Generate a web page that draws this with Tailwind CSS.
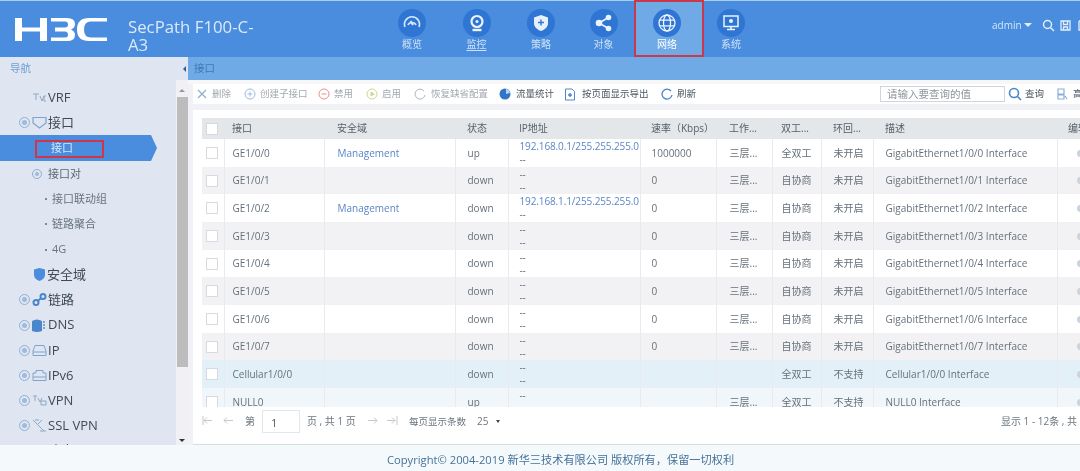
<!DOCTYPE html>
<html lang="zh">
<head>
<meta charset="utf-8">
<script src="https://cdn.jsdelivr.net/npm/@tailwindcss/browser@4"></script>
<title>H3C</title>
</head>
<body class="m-0 overflow-hidden bg-white">
<div class="w-[1080px] h-[471px] overflow-hidden flex flex-col blur-[0.45px] font-['Open_Sans','Noto_Sans_CJK_SC',sans-serif]">

  <!-- Top bar -->
  <header class="h-[57px] shrink-0 flex bg-[#4a8cdd] border-t border-[#a8d0ee] text-[#cfe2f6]">
    <div class="w-[128px] shrink-0 pl-[15px] pt-[17px]">
      <svg width="93" height="24" viewBox="0 0 93 24" fill="#fff">
        <path d="M0 0H7V9.500H25V0H32V23H25V13.500H7V23H0Z"/>
        <path d="M36 0H52Q60 0 60 6Q60 10 56 11.500Q60 13 60 17Q60 23 52 23H36V19.500H50Q53 19.500 53 17Q53 13.500 50 13.500H40V9.500H50Q53 9.500 53 6.500Q53 3.500 50 3.500H36Z"/>
        <path d="M92 0V3.500H76Q69 3.500 69 11.500Q69 19.500 76 19.500H92V23H74Q62 23 62 11.500Q62 0 74 0Z"/>
      </svg>
    </div>
    <div class="w-[130px] shrink-0 pt-[17px] text-[16.800px] leading-[18px] text-[#dbe9f8]">SecPath F100-C-<br>A3</div>
    <div class="flex ml-[122px] text-[10px] leading-[12px] text-center">
      <div class="w-[64px] pt-[8px] flex flex-col items-center gap-[1px]">
        <div class="w-[28px] h-[28px] rounded-full bg-[#2f75d3] flex items-center justify-center">
          <svg width="18" height="18" viewBox="0 0 18 18" fill="none" stroke="#d7e8fa" stroke-width="1.600"><path d="M2 13A7.500 7.500 0 1 1 16 13"/><path d="M5 11A4.500 4.500 0 0 1 13 11"/><path d="M7.500 7L10 11" stroke-width="2"/></svg>
        </div>
        <span>概览</span>
      </div>
      <div class="w-[65px] pt-[8px] flex flex-col items-center gap-[1px]">
        <div class="w-[28px] h-[28px] rounded-full bg-[#2f75d3] flex items-center justify-center">
          <svg width="18" height="18" viewBox="0 0 18 18" fill="none" stroke="#eaf3fc" stroke-width="2.200"><circle cx="9" cy="7.500" r="5.500"/><circle cx="9" cy="7.500" r="1.500" fill="#eaf3fc" stroke="none"/><path d="M4.500 16H13.500" stroke-width="2.400"/></svg>
        </div>
        <span class="underline underline-offset-2">监控</span>
      </div>
      <div class="w-[64px] pt-[8px] flex flex-col items-center gap-[1px]">
        <div class="w-[28px] h-[28px] rounded-full bg-[#2f75d3] flex items-center justify-center">
          <svg width="18" height="18" viewBox="0 0 18 18"><path d="M9 1L16 3.500V9C16 13 13 15.500 9 17C5 15.500 2 13 2 9V3.500Z" fill="#e6f0fb"/><path d="M9 5.500V11.500M6 8.500H12" stroke="#2f75d3" stroke-width="1.400"/></svg>
        </div>
        <span>策略</span>
      </div>
      <div class="w-[61px] pt-[8px] flex flex-col items-center gap-[1px]">
        <div class="w-[28px] h-[28px] rounded-full bg-[#2f75d3] flex items-center justify-center">
          <svg width="18" height="18" viewBox="0 0 18 18" fill="#eaf3fc"><circle cx="13.500" cy="3.500" r="2.800"/><circle cx="13.500" cy="14.500" r="2.800"/><circle cx="4" cy="9" r="3.300"/><path d="M4 9L13.500 3.500M4 9L13.500 14.500" stroke="#eaf3fc" stroke-width="1.600"/></svg>
        </div>
        <span>对象</span>
      </div>
      <div class="w-[70px] h-[57px] -mt-px pt-[7px] pr-[4px] flex flex-col items-center gap-[1px] bg-[#6fa9e6] border-2 border-[#c9394b] text-white">
        <div class="w-[28px] h-[28px] rounded-full bg-[#2f75d3] flex items-center justify-center">
          <svg width="20" height="20" viewBox="0 0 20 20" fill="none" stroke="#eef5fd" stroke-width="1.300"><circle cx="10" cy="10" r="8"/><ellipse cx="10" cy="10" rx="3.500" ry="8"/><path d="M2.500 7.200H17.500M2.500 12.800H17.500"/></svg>
        </div>
        <span>网络</span>
      </div>
      <div class="w-[54px] pt-[8px] flex flex-col items-center gap-[1px]">
        <div class="w-[28px] h-[28px] rounded-full bg-[#2f75d3] flex items-center justify-center">
          <svg width="18" height="18" viewBox="0 0 18 18" fill="none" stroke="#eaf3fc" stroke-width="1.500"><rect x="2" y="2" width="14" height="10.500"/><circle cx="9" cy="7" r="2" fill="#eaf3fc" stroke="none"/><path d="M5 15.500H13M9 12.500V15.500"/></svg>
        </div>
        <span>系统</span>
      </div>
    </div>
    <div class="ml-[234px] pt-[17px] flex items-center h-[14px] box-content text-[10px] leading-[14px] text-[#d5e6f8]">
      <span class="w-[28px] shrink-0">admin</span>
      <span class="ml-[4px] w-0 h-0 border-x-[4px] border-x-transparent border-t-[4px] border-t-[#e2eefa]"></span>
      <svg class="ml-[10px] shrink-0" width="13" height="13" viewBox="0 0 13 13" fill="none" stroke="#e2eefa" stroke-width="1.500"><circle cx="5.500" cy="5.500" r="4"/><path d="M8.500 8.500L12 12"/></svg>
      <svg class="ml-[5px] shrink-0" width="11" height="11" viewBox="0 0 11 11" fill="none" stroke="#e2eefa" stroke-width="1.300"><path d="M1 1H10V10H1ZM3.500 1V4.500H7.500V1M3.500 10V7H7.500V10"/></svg>
      <svg class="ml-[7px] shrink-0" width="8" height="11" viewBox="0 0 8 11" fill="none" stroke="#e2eefa" stroke-width="1.300"><path d="M1 1H8M1 1V10H8"/></svg>
    </div>
  </header>

  <!-- Middle -->
  <div class="h-[388px] shrink-0 flex">
    <!-- Sidebar -->
    <aside class="w-[176px] shrink-0 bg-[#dfe6f2] overflow-hidden text-[13px] text-[#3e4a56]">
      <div class="h-[28px] pl-[10px] pt-[3px] text-[10.500px] leading-[16px] text-[#6f9fd6]">导航</div>
      <div class="h-[25.200px] flex items-center pl-[33px]">
        <svg width="14" height="10" viewBox="0 0 14 10" fill="none" stroke="#8fa9c4" stroke-width="1"><path d="M0 1H6M3 1V7M7 3L9 8L11 3M13 3H11V8H13"/></svg>
        <span class="ml-[1px]">VRF</span>
      </div>
      <div class="h-[25.200px] flex items-center pl-[19px]">
        <span class="w-[11px] h-[11px] rounded-full border border-[#8fb0d4] flex items-center justify-center"><span class="w-[5px] h-[5px] rounded-full bg-[#9dbbdc]"></span></span>
        <svg class="ml-[2px]" width="15" height="13" viewBox="0 0 15 13" fill="none" stroke="#7ea4cf" stroke-width="1.200"><path d="M1 1.500H14V7L7.500 12L1 7Z"/></svg>
        <span class="ml-[1px]">接口</span>
      </div>
      <div class="relative h-[26px] w-[151px] bg-[#4a8cdd] pl-[51px] text-[11px] leading-[26px] text-[#d8e8f8]">接口
        <span class="absolute left-[151px] top-0 w-0 h-0 border-y-[13px] border-y-transparent border-l-[6px] border-l-[#4a8cdd]"></span>
        <span class="absolute left-[35px] top-[5px] w-[69px] h-[18px] border-2 border-[#d03646]"></span>
      </div>
      <div class="h-[25.200px] flex items-center pl-[32px] text-[11px] text-[#5a6773]">
        <span class="w-[10px] h-[10px] rounded-full border border-[#8fb0d4] flex items-center justify-center"><span class="w-[4px] h-[4px] rounded-full bg-[#9dbbdc]"></span></span>
        <span class="ml-[6px]">接口对</span>
      </div>
      <div class="h-[25.200px] flex items-center pl-[45px] text-[11px] text-[#68747f]"><span class="w-[2px] h-[2px] bg-[#7d8a96] mr-[5px]"></span>接口联动组</div>
      <div class="h-[25.200px] flex items-center pl-[45px] text-[11px] text-[#68747f]"><span class="w-[2px] h-[2px] bg-[#7d8a96] mr-[5px]"></span>链路聚合</div>
      <div class="h-[25.200px] flex items-center pl-[45px] text-[11px] text-[#68747f]"><span class="w-[2px] h-[2px] bg-[#7d8a96] mr-[5px]"></span>4G</div>
      <div class="h-[25.200px] flex items-center pl-[34px]">
        <svg width="11" height="13" viewBox="0 0 11 13"><path d="M5.500 0L11 1.500V7C11 10 8.500 12 5.500 13C2.500 12 0 10 0 7V1.500Z" fill="#4a8cdd"/></svg>
        <span class="ml-[2px]">安全域</span>
      </div>
      <div class="h-[25.200px] flex items-center pl-[19px]">
        <span class="w-[11px] h-[11px] rounded-full border border-[#8fb0d4] flex items-center justify-center"><span class="w-[5px] h-[5px] rounded-full bg-[#9dbbdc]"></span></span>
        <svg class="ml-[2px]" width="15" height="13" viewBox="0 0 15 13" fill="none" stroke="#4a86cc" stroke-width="2"><circle cx="4" cy="9.500" r="2.500"/><circle cx="11" cy="3.500" r="2.500"/><path d="M5.500 8L9.500 5"/></svg>
        <span class="ml-[1px]">链路</span>
      </div>
      <div class="h-[25.200px] flex items-center pl-[19px]">
        <span class="w-[11px] h-[11px] rounded-full border border-[#8fb0d4] flex items-center justify-center"><span class="w-[5px] h-[5px] rounded-full bg-[#9dbbdc]"></span></span>
        <svg class="ml-[2px]" width="15" height="13" viewBox="0 0 15 13"><path d="M0 2Q5 -1 10 2V12Q5 14 0 12Z" fill="#4a86cc"/><path d="M12 2V11" stroke="#7ea4cf" stroke-width="2" stroke-dasharray="2 1"/></svg>
        <span class="ml-[1px]">DNS</span>
      </div>
      <div class="h-[25.200px] flex items-center pl-[19px]">
        <span class="w-[11px] h-[11px] rounded-full border border-[#8fb0d4] flex items-center justify-center"><span class="w-[5px] h-[5px] rounded-full bg-[#9dbbdc]"></span></span>
        <svg class="ml-[2px]" width="15" height="13" viewBox="0 0 15 13" fill="none" stroke="#7ea4cf"><path d="M3 1.500H12L14 7V11.500H1V7ZM1 8H14"/></svg>
        <span class="ml-[1px]">IP</span>
      </div>
      <div class="h-[25.200px] flex items-center pl-[19px]">
        <span class="w-[11px] h-[11px] rounded-full border border-[#8fb0d4] flex items-center justify-center"><span class="w-[5px] h-[5px] rounded-full bg-[#9dbbdc]"></span></span>
        <svg class="ml-[2px]" width="15" height="13" viewBox="0 0 15 13" fill="none" stroke="#7ea4cf"><path d="M4 1.500H11V4H14V11.500H1V4H4ZM1 8H14"/></svg>
        <span class="ml-[1px]">IPv6</span>
      </div>
      <div class="h-[25.200px] flex items-center pl-[19px]">
        <span class="w-[11px] h-[11px] rounded-full border border-[#8fb0d4] flex items-center justify-center"><span class="w-[5px] h-[5px] rounded-full bg-[#9dbbdc]"></span></span>
        <svg class="ml-[2px]" width="15" height="13" viewBox="0 0 15 13" fill="none" stroke="#8fa9c4"><path d="M1 2H5M3 2V7M6 4L8 8L10 4M9 7H14V11H9Z"/></svg>
        <span class="ml-[1px]">VPN</span>
      </div>
      <div class="h-[25.200px] flex items-center pl-[19px]">
        <span class="w-[11px] h-[11px] rounded-full border border-[#8fb0d4] flex items-center justify-center"><span class="w-[5px] h-[5px] rounded-full bg-[#9dbbdc]"></span></span>
        <svg class="ml-[2px]" width="15" height="13" viewBox="0 0 15 13" fill="none" stroke="#8fa9c4"><path d="M1 1L12 12M3 1H7M5 6L10 1M8 12H14"/></svg>
        <span class="ml-[1px]">SSL VPN</span>
      </div>
      <div class="h-[25.200px] flex items-center pl-[19px]">
        <span class="w-[11px] h-[11px] rounded-full border border-[#8fb0d4] flex items-center justify-center"><span class="w-[5px] h-[5px] rounded-full bg-[#9dbbdc]"></span></span>
        <svg class="ml-[2px]" width="15" height="13" viewBox="0 0 15 13" fill="none" stroke="#7ea4cf"><circle cx="7.500" cy="6.500" r="5.500"/></svg>
        <span class="ml-[1px]">路由</span>
      </div>
    </aside>

    <!-- Scrollbar -->
    <div class="w-[12px] shrink-0 bg-[#f1f1f5] flex flex-col items-center">
      <div class="h-[23px] w-full shrink-0 bg-[#dfe6f2] flex items-center justify-end pr-[2px]"><span class="w-0 h-0 border-y-[3.500px] border-y-transparent border-r-[3.500px] border-r-[#2f5f9a]"></span></div>
      <div class="h-[17px] w-full shrink-0 flex items-end justify-center pb-[5px]"><span class="w-0 h-0 border-x-[3px] border-x-transparent border-b-[3px] border-b-[#999]"></span></div>
      <div class="w-[11px] h-[270px] shrink-0 bg-[#bcbcbc]"></div>
      <div class="flex-1"></div>
      <span class="mb-[3px] w-0 h-0 border-x-[3px] border-x-transparent border-t-[3px] border-t-[#333]"></span>
    </div>

    <!-- Main -->
    <main class="w-[892px] shrink-0 flex flex-col bg-[#f1f2f5] overflow-hidden">
      <div class="h-[23px] shrink-0 flex bg-[#6fa9e6]">
        <span class="ml-[6px] text-[10.500px] leading-[23px] text-[#3f78b8]">接口</span>
      </div>
      <div class="h-[4px] shrink-0 bg-[#f7f7f9]"></div>
      <!-- Toolbar -->
      <div class="h-[20px] shrink-0 ml-[5px] bg-white flex items-center text-[9.500px] leading-[20px] text-[#a3a9b0] [&>*]:shrink-0">
        <svg class="ml-[4px]" width="10" height="10" viewBox="0 0 10 10" stroke="#8fb0d0" stroke-width="1.300"><path d="M1 1L9 9M9 1L1 9"/></svg>
        <span class="ml-[5px] w-[32px]">删除</span>
        <svg width="12" height="12" viewBox="0 0 12 12" fill="none" stroke="#9dbbe0"><circle cx="6" cy="6" r="5"/><path d="M6 3.500V8.500M3.500 6H8.500"/></svg>
        <span class="ml-[4px] w-[58px] whitespace-nowrap">创建子接口</span>
        <svg width="12" height="12" viewBox="0 0 12 12" fill="none" stroke="#ec8c8c"><circle cx="6" cy="6" r="5"/><path d="M3.500 6H8.500"/></svg>
        <span class="ml-[4px] w-[32px]">禁用</span>
        <svg width="12" height="12" viewBox="0 0 12 12" fill="none" stroke="#cfd98c"><circle cx="6" cy="6" r="5"/><path d="M5 4L8 6L5 8Z" fill="#cfd98c"/></svg>
        <span class="ml-[4px] w-[31px]">启用</span>
        <svg class="ml-[1px]" width="12" height="12" viewBox="0 0 12 12" fill="none" stroke="#aeb6be"><path d="M10 3A5 5 0 1 0 11 7"/></svg>
        <span class="ml-[5px] w-[68px] whitespace-nowrap">恢复缺省配置</span>
        <svg width="12" height="12" viewBox="0 0 12 12"><circle cx="6" cy="6" r="5.500" fill="#2f75c8"/><path d="M7 1A5 5 0 0 1 11 5L7 6Z" fill="#bcd6f0"/></svg>
        <span class="ml-[5px] w-[48px] whitespace-nowrap text-[#4a5560]">流量统计</span>
        <svg width="12" height="13" viewBox="0 0 12 13" fill="none" stroke="#4a86cc"><path d="M1.500 1H8L10.500 3.500V12H1.500Z"/><path d="M4 7H8M6 5V9" stroke-width="1.400"/></svg>
        <span class="ml-[6px] w-[79px] whitespace-nowrap text-[#4a5560]">按页面显示导出</span>
        <svg width="12" height="12" viewBox="0 0 12 12" fill="none" stroke="#4a86cc" stroke-width="1.300"><path d="M10 3A5 5 0 1 0 11 7"/></svg>
        <span class="ml-[4px] w-[203px] whitespace-nowrap text-[#4a5560]">刷新</span>
        <div class="w-[125px] h-[16px] border border-[#cfd6dd] pl-[6px] text-[10.500px] leading-[14px] text-[#8d949b]">请输入要查询的值</div>
        <svg class="ml-[3px]" width="14" height="14" viewBox="0 0 14 14" fill="none" stroke="#4a86cc" stroke-width="1.600"><circle cx="6" cy="6" r="4.500"/><path d="M9.500 9.500L13 13"/></svg>
        <span class="ml-[3px] w-[31px] whitespace-nowrap text-[#4a5560]">查询</span>
        <svg width="12" height="12" viewBox="0 0 12 12" fill="none" stroke="#8cb0d8" stroke-width="1.200"><path d="M2 1H8V6H2ZM2 7H8V11H2ZM9 8L11 11"/></svg>
        <span class="ml-[5px] whitespace-nowrap text-[#4a5560]">高级</span>
      </div>
      <div class="h-[6px] shrink-0"></div>
      <!-- Panel -->
      <div class="ml-[5px] h-[335px] shrink-0 bg-white border-b border-[#dcdcdc] flex flex-col overflow-hidden">
        <div class="h-[297px] shrink-0 overflow-hidden pt-[8px] pl-[9px]">
          <table class="table-fixed border-collapse w-[905px] text-[10px] text-[#66717b] [&_td]:h-[28px] [&_td]:p-0 [&_td]:align-middle [&_td]:border-l [&_td]:border-[#e8eaee] [&_td]:whitespace-nowrap [&_td]:overflow-hidden [&_td:first-child]:border-l-0 [&_th]:h-[21px] [&_th]:p-0 [&_th]:font-normal [&_th]:text-left [&_th]:whitespace-nowrap [&_th]:overflow-hidden [&_th]:text-[#56616b] [&_th]:bg-[#e4e7ea]">
            <colgroup>
              <col class="w-[22px]"><col class="w-[100px]"><col class="w-[131px]"><col class="w-[53px]"><col class="w-[132px]"><col class="w-[76px]"><col class="w-[56px]"><col class="w-[49px]"><col class="w-[52px]"><col class="w-[184px]"><col class="w-[50px]">
            </colgroup>
            <thead>
              <tr>
                <th><span class="block ml-[4px] w-[12px] h-[12px] bg-white border border-[#d6d9dd]"></span></th>
                <th class="!pl-[8px]">接口</th><th class="!pl-[13px]">安全域</th><th class="!pl-[12px]">状态</th><th class="!pl-[11px]">IP地址</th><th class="!pl-[11px]">速率（Kbps）</th><th class="!pl-[13px]">工作...</th><th class="!pl-[9px]">双工...</th><th class="!pl-[12px]">环回...</th><th class="!pl-[12px]">描述</th><th class="!pl-[11px]">编辑</th>
              </tr>
            </thead>
            <tbody class="[&_tr:nth-child(even)]:bg-[#f2f2f4] [&_a]:text-[#5a86c8] [&_td:nth-child(2)]:pl-[8px] [&_td:nth-child(3)]:pl-[13px] [&_td:nth-child(4)]:pl-[12px] [&_td:nth-child(5)]:pl-[11px] [&_td:nth-child(5)]:leading-[13px] [&_td:nth-child(5)]:tracking-[-0.12px] [&_td:nth-child(6)]:pl-[11px] [&_td:nth-child(7)]:pl-[13px] [&_td:nth-child(8)]:pl-[9px] [&_td:nth-child(9)]:pl-[12px] [&_td:nth-child(10)]:pl-[12px] [&_td:nth-child(11)]:pl-[19px] [&_i]:block [&_i]:ml-[4px] [&_i]:w-[12px] [&_i]:h-[12px] [&_i]:bg-white [&_i]:border [&_i]:border-[#d6d9dd] [&_b]:block [&_b]:w-[9px] [&_b]:h-[7px] [&_b]:rounded-full [&_b]:bg-[#cdd3da]">
              <tr><td><i></i></td><td>GE1/0/0</td><td><a>Management</a></td><td>up</td><td><a>192.168.0.1/255.255.255.0</a><br>--</td><td>1000000</td><td>三层...</td><td>全双工</td><td>未开启</td><td>GigabitEthernet1/0/0 Interface</td><td><b></b></td></tr>
              <tr class="[&>td]:!h-[27px]"><td><i></i></td><td>GE1/0/1</td><td></td><td>down</td><td>--<br>--</td><td>0</td><td>三层...</td><td>自协商</td><td>未开启</td><td>GigabitEthernet1/0/1 Interface</td><td><b></b></td></tr>
              <tr><td><i></i></td><td>GE1/0/2</td><td><a>Management</a></td><td>down</td><td><a>192.168.1.1/255.255.255.0</a><br>--</td><td>0</td><td>三层...</td><td>自协商</td><td>未开启</td><td>GigabitEthernet1/0/2 Interface</td><td><b></b></td></tr>
              <tr><td><i></i></td><td>GE1/0/3</td><td></td><td>down</td><td>--<br>--</td><td>0</td><td>三层...</td><td>自协商</td><td>未开启</td><td>GigabitEthernet1/0/3 Interface</td><td><b></b></td></tr>
              <tr class="[&>td]:!h-[27px]"><td><i></i></td><td>GE1/0/4</td><td></td><td>down</td><td>--<br>--</td><td>0</td><td>三层...</td><td>自协商</td><td>未开启</td><td>GigabitEthernet1/0/4 Interface</td><td><b></b></td></tr>
              <tr><td><i></i></td><td>GE1/0/5</td><td></td><td>down</td><td>--<br>--</td><td>0</td><td>三层...</td><td>自协商</td><td>未开启</td><td>GigabitEthernet1/0/5 Interface</td><td><b></b></td></tr>
              <tr><td><i></i></td><td>GE1/0/6</td><td></td><td>down</td><td>--<br>--</td><td>0</td><td>三层...</td><td>自协商</td><td>未开启</td><td>GigabitEthernet1/0/6 Interface</td><td><b></b></td></tr>
              <tr class="[&>td]:!h-[27px]"><td><i></i></td><td>GE1/0/7</td><td></td><td>down</td><td>--<br>--</td><td>0</td><td>三层...</td><td>自协商</td><td>未开启</td><td>GigabitEthernet1/0/7 Interface</td><td><b></b></td></tr>
              <tr class="!bg-[#e4f0f8]"><td><i></i></td><td>Cellular1/0/0</td><td></td><td>down</td><td>--<br>--</td><td></td><td></td><td>全双工</td><td>不支持</td><td>Cellular1/0/0 Interface</td><td><b></b></td></tr>
              <tr class="!bg-[#f1f6fa]"><td><i></i></td><td>NULL0</td><td></td><td>up</td><td>--<br>--</td><td></td><td>三层...</td><td>全双工</td><td>不支持</td><td>NULL0 Interface</td><td><b></b></td></tr>
            </tbody>
          </table>
        </div>
        <!-- Pagination -->
        <div class="flex-1 flex items-start pt-[3px] text-[10px] leading-[23px] text-[#6c757e] whitespace-nowrap [&>*]:shrink-0">
          <svg class="ml-[9px] mt-[6px]" width="11" height="9" viewBox="0 0 11 9" fill="none" stroke="#c3c9cf"><path d="M1 0V9M10 4.500H2M5 1.500L2 4.500L5 7.500"/></svg>
          <svg class="ml-[10px] mt-[6px]" width="10" height="9" viewBox="0 0 10 9" fill="none" stroke="#c3c9cf"><path d="M10 4.500H1M4 1.500L1 4.500L4 7.500"/></svg>
          <span class="ml-[12px] w-[10px]">第</span>
          <span class="ml-[7px] w-[38px] h-[23px] border border-[#e4e6e9] pl-[8px] text-[#4a5560] text-[11px]">1</span>
          <span class="ml-[7px] w-[60px]">页 , 共 1 页</span>
          <svg class="ml-[1px] mt-[6px]" width="10" height="9" viewBox="0 0 10 9" fill="none" stroke="#c3c9cf"><path d="M0 4.500H9M6 1.500L9 4.500L6 7.500"/></svg>
          <svg class="ml-[9px] mt-[6px]" width="11" height="9" viewBox="0 0 11 9" fill="none" stroke="#c3c9cf"><path d="M10 0V9M0 4.500H8M5 1.500L8 4.500L5 7.500"/></svg>
          <span class="ml-[11px] w-[57px] text-[9.500px]">每页显示条数</span>
          <span class="ml-[11px] w-[13px]">25</span>
          <span class="ml-[6px] mt-[10px] w-0 h-0 border-x-[2.500px] border-x-transparent border-t-[3px] border-t-[#444]"></span>
          <span class="ml-[501px]">显示 1 - 12条 , 共 12条</span>
        </div>
      </div>
      <div class="flex-1"></div>
    </main>
  </div>

  <!-- Footer -->
  <footer class="flex-1 bg-[#f4fafb] pl-[387px] text-[11.200px] leading-[30px] text-[#46709a] whitespace-nowrap">Copyright© 2004-2019 新华三技术有限公司 版权所有，保留一切权利</footer>
</div>
</body>
</html>
